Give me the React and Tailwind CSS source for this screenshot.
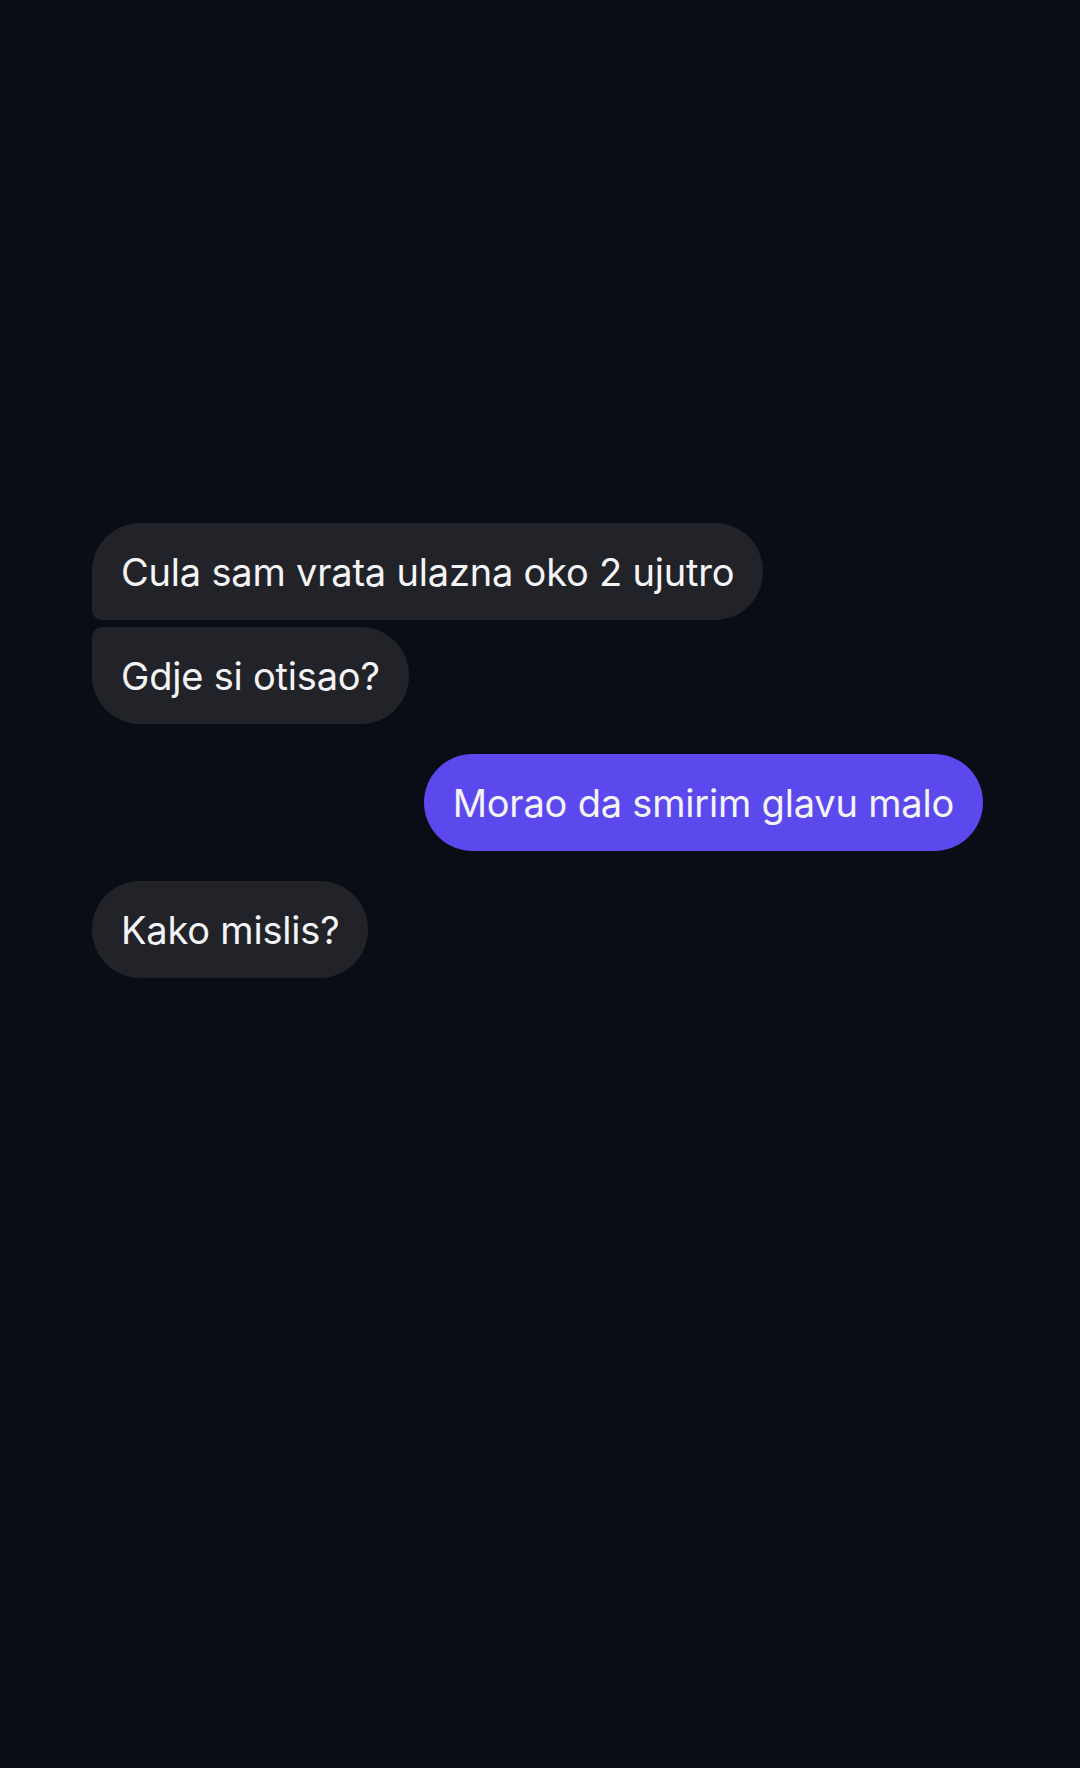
import React from "react";

const messages = [
  { id: 1, from: "them", text: "Cula sam vrata ulazna oko 2 ujutro", shape: "rounded-[48px] rounded-bl-[10px]" },
  { id: 2, from: "them", text: "Gdje si otisao?", shape: "rounded-[48px] rounded-tl-[10px]", gap: "mt-[7px]" },
  { id: 3, from: "me", text: "Morao da smirim glavu malo", shape: "rounded-[49px]", gap: "mt-[30px]" },
  { id: 4, from: "them", text: "Kako mislis?", shape: "rounded-[48px]", gap: "mt-[30px]" },
];

const Bubble = ({ from, text, shape, gap = "" }) => {
  const mine = from === "me";
  return (
    <div className={`flex ${mine ? "justify-end" : "justify-start"} ${gap}`}>
      <div
        className={`h-[97px] flex items-center px-[29px] text-[38px] leading-none tracking-[-0.2px] text-[#f4f4f6] ${shape} ${
          mine ? "bg-[#5b49ee]" : "bg-[#212329]"
        }`}
      >
        {text}
      </div>
    </div>
  );
};

export default function App() {
  return (
    <div
      className="min-h-[1768px] w-full bg-[#0b0d16] pt-[523px] pl-[92px] pr-[97px]"
      style={{ fontFamily: "Inter, 'Noto Sans', sans-serif" }}
    >
      {messages.map((m) => (
        <Bubble key={m.id} {...m} />
      ))}
    </div>
  );
}
